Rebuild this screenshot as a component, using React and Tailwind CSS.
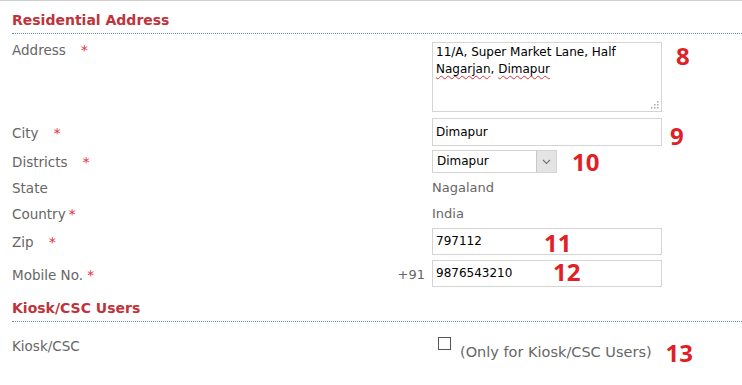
import React from "react";

const font = { fontFamily: '"DejaVu Sans", Verdana, sans-serif' };

function Req() {
  return <span className="text-[#e8303a] ml-[11px]">*</span>;
}

function Num({ children, className = "" }) {
  return (
    <span
      className={`text-[#e01f26] font-bold text-[24px] leading-none ${className}`}
      style={{ fontFamily: '"Open Sans", sans-serif' }}
    >
      {children}
    </span>
  );
}

function Heading({ children, className = "" }) {
  return (
    <div
      className={`font-bold text-[#c0333b] text-[14px] leading-[20px] pb-[3px] border-b border-dotted border-[#6b8fa3] ${className}`}
    >
      {children}
    </div>
  );
}

function Label({ children, className = "" }) {
  return (
    <div className={`w-[420px] shrink-0 text-[13.5px] leading-[16px] text-[#666] ${className}`}>
      {children}
    </div>
  );
}

export default function App() {
  const input =
    "w-[230px] border border-[#d4d4d4] bg-white px-[3px] text-[12px] text-black outline-none";
  const squiggle =
    "underline decoration-wavy decoration-[#e03030] decoration-1 underline-offset-2";

  return (
    <div className="w-[742px] h-[385px] bg-white border-t border-[#cfcfcf] pl-3 overflow-hidden" style={font}>
      <Heading className="pt-[9px]">Residential Address</Heading>

      {/* Address */}
      <div className="flex items-start mt-[8px]">
        <Label>
          Address <Req />
        </Label>
        <div className="relative w-[230px] h-[70px] border border-[#d4d4d4] px-[3px] pt-[1px] text-[12px] leading-[17px] text-black">
          11/A, Super Market Lane, Half
          <br />
          <span className={squiggle}>Nagarjan</span>, <span className={squiggle}>Dimapur</span>
          <svg className="absolute right-[2px] bottom-[2px]" width="8" height="8" viewBox="0 0 8 8">
            <rect x="6" y="0" width="1.5" height="1.5" fill="#aaa" />
            <rect x="3" y="3" width="1.5" height="1.5" fill="#aaa" />
            <rect x="6" y="3" width="1.5" height="1.5" fill="#aaa" />
            <rect x="0" y="6" width="1.5" height="1.5" fill="#aaa" />
            <rect x="3" y="6" width="1.5" height="1.5" fill="#aaa" />
            <rect x="6" y="6" width="1.5" height="1.5" fill="#aaa" />
          </svg>
        </div>
        <Num className="ml-[14px] mt-[2px]">8</Num>
      </div>

      {/* City */}
      <div className="flex items-center mt-[6px] h-[28px]">
        <Label className="mt-[2px]">
          City <Req />
        </Label>
        <div className={`${input} h-[28px] leading-[26px]`}>Dimapur</div>
        <Num className="ml-[8px] mt-[8px]">9</Num>
      </div>

      {/* Districts */}
      <div className="flex items-center mt-[4px] h-[23px]">
        <Label>
          Districts <Req />
        </Label>
        <div className="w-[125px] h-[23px] border border-[#d4d4d4] flex items-stretch text-[12px] text-black">
          <div className="flex-1 px-[4px] leading-[21px]">Dimapur</div>
          <div className="w-[20px] bg-[#e4e4e4] border-l border-[#c8c8c8] flex items-center justify-center">
            <svg width="9" height="6" viewBox="0 0 9 6">
              <path d="M1 1 L4.5 4.5 L8 1" fill="none" stroke="#777" strokeWidth="1.2" />
            </svg>
          </div>
        </div>
        <Num className="ml-[15px]">10</Num>
      </div>

      {/* State */}
      <div className="flex mt-[7px]">
        <Label>State</Label>
        <div className="text-[13px] leading-[16px] text-[#666]">Nagaland</div>
      </div>

      {/* Country */}
      <div className="flex mt-[10px]">
        <Label>
          Country<span className="text-[#e8303a] ml-[3px]">*</span>
        </Label>
        <div className="text-[13px] leading-[16px] text-[#666]">India</div>
      </div>

      {/* Zip */}
      <div className="flex items-center mt-[6px] h-[27px]">
        <Label>
          Zip <Req />
        </Label>
        <div className={`${input} h-[27px] leading-[25px] relative`}>
          797112
          <Num className="absolute left-[111px] top-[2px]">11</Num>
        </div>
      </div>

      {/* Mobile */}
      <div className="flex items-center mt-[5px] h-[27px]">
        <Label className="flex justify-between pr-[7px] mt-[2px]">
          <span>
            Mobile No. <span className="text-[#e8303a]">*</span>
          </span>
          <span className="text-[13px]">+91</span>
        </Label>
        <div className={`${input} h-[27px] leading-[25px] relative`}>
          9876543210
          <Num className="absolute left-[120px] top-[-1px]">12</Num>
        </div>
      </div>

      <Heading className="pt-[11px]">Kiosk/CSC Users</Heading>

      {/* Kiosk */}
      <div className="flex items-start mt-[14px]">
        <Label className="mt-[2px]">Kiosk/CSC</Label>
        <div className="w-[13px] h-[13px] border border-[#555] bg-white ml-[6px] mt-[1px]" />
        <span className="ml-[9px] mt-[8px] text-[14.5px] leading-[16px] text-[#666]">(Only for Kiosk/CSC Users)</span>
        <Num className="ml-[14px] mt-[5px]">13</Num>
      </div>
    </div>
  );
}
